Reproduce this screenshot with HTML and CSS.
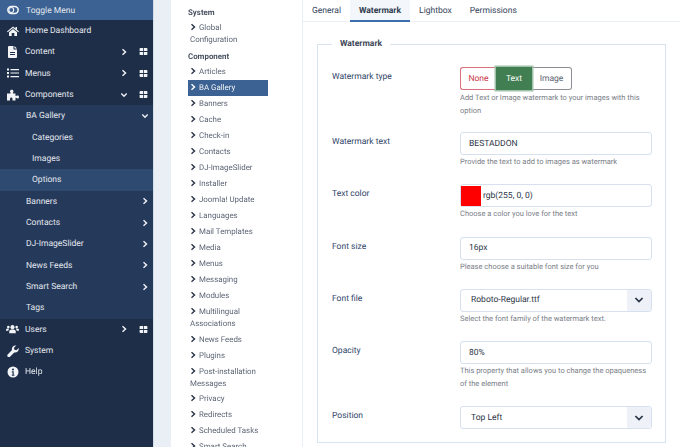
FILE: index.html
```html
<!DOCTYPE html>
<html lang="en">
<head>
<meta charset="utf-8">
<title>BA Gallery Options</title>
<link rel="stylesheet" href="styles.css">
</head>
<body>
<svg class="defs" width="0" height="0" aria-hidden="true">
  <symbol id="chev-r" viewBox="0 0 10 12"><path d="M2.5 1.5 7.5 6l-5 4.5" fill="none" stroke="currentColor" stroke-width="2.4"/></symbol>
  <symbol id="chev-d" viewBox="0 0 12 10"><path d="M1.5 2.5 6 7l4.5-4.5" fill="none" stroke="currentColor" stroke-width="2.2"/></symbol>
  <symbol id="grid" viewBox="0 0 10 9"><path d="M0 1a1 1 0 0 1 1-1h3.500v4H0zM5.500 0H9a1 1 0 0 1 1 1v3H5.500zM0 5h4.500v4H1a1 1 0 0 1-1-1zM5.500 5H10v3a1 1 0 0 1-1 1H5.500z" fill="currentColor"/></symbol>
</svg>
<div class="page">
  <aside class="sidebar">
    <div class="toggle">
      <svg class="ico" viewBox="0 0 14 10"><rect x="1" y="1" width="12" height="8" rx="4" fill="none" stroke="currentColor" stroke-width="1.800"/><circle cx="5" cy="5" r="2.800" fill="none" stroke="currentColor" stroke-width="1.200"/></svg>
      <span>Toggle Menu</span>
    </div>
    <ul class="menu">
      <li class="item"><svg class="ico" viewBox="0 0 12 10"><path d="M6 .5 0 5.500l.7.8L6 2l5.300 4.300.7-.8-2-1.700V1H8.500v1.500zM2 6.300 6 3l4 3.300V10H7.300V7H4.700v3H2z" fill="currentColor"/></svg><span class="lbl">Home Dashboard</span></li>
      <li class="item"><svg class="ico" viewBox="0 0 12 12"><path d="M2 0h4.500v3.500H10V11a1 1 0 0 1-1 1H2a1 1 0 0 1-1-1V1a1 1 0 0 1 1-1zm5.500 0L10 2.500H7.500zM3 6v1h5V6zm0 2v1h5V8z" fill="currentColor" fill-rule="evenodd"/></svg><span class="lbl">Content</span><svg class="chev"><use href="#chev-r"/></svg><svg class="grid"><use href="#grid"/></svg></li>
      <li class="item"><svg class="ico" viewBox="0 0 12 10"><path d="M0 .5h2v2H0zM3.500 1H12v1.200H3.500zM0 4h2v2H0zM3.500 4.400H12v1.200H3.500zM0 7.500h2v2H0zM3.500 8H12v1.200H3.500z" fill="currentColor"/></svg><span class="lbl">Menus</span><svg class="chev"><use href="#chev-r"/></svg><svg class="grid"><use href="#grid"/></svg></li>
      <li class="item"><svg class="ico" viewBox="0 0 12 11"><path d="M0 4h3.500c.5-.7-.5-1-.5-2.200C3 .8 3.700.2 4.700.2s1.800.6 1.800 1.600C6.500 3 5.500 3.300 6 4h2.500v2.500c.7.500 1-.5 2-.5 1 0 1.500.7 1.500 1.500S11.500 9 10.500 9c-1 0-1.300-1-2-.5V11H5.500V9.500C5.500 8.700 5 8 4.200 8S3 8.700 3 9.500V11H0z" fill="currentColor"/></svg><span class="lbl">Components</span><svg class="chev down"><use href="#chev-d"/></svg><svg class="grid"><use href="#grid"/></svg></li>
      <li class="sub">
        <ul>
          <li class="row open"><span class="lbl">BA Gallery</span><svg class="chev2 down"><use href="#chev-d"/></svg></li>
          <li class="row deep"><span class="lbl">Categories</span></li>
          <li class="row deep"><span class="lbl">Images</span></li>
          <li class="row deep current"><span class="lbl">Options</span></li>
          <li class="row"><span class="lbl">Banners</span><svg class="chev2"><use href="#chev-r"/></svg></li>
          <li class="row"><span class="lbl">Contacts</span><svg class="chev2"><use href="#chev-r"/></svg></li>
          <li class="row"><span class="lbl">DJ-ImageSlider</span><svg class="chev2"><use href="#chev-r"/></svg></li>
          <li class="row"><span class="lbl">News Feeds</span><svg class="chev2"><use href="#chev-r"/></svg></li>
          <li class="row"><span class="lbl">Smart Search</span><svg class="chev2"><use href="#chev-r"/></svg></li>
          <li class="row"><span class="lbl">Tags</span></li>
        </ul>
      </li>
      <li class="item"><svg class="ico wide" viewBox="0 0 14 10"><circle cx="7" cy="3" r="2.200" fill="currentColor"/><circle cx="2.500" cy="2.800" r="1.400" fill="currentColor"/><circle cx="11.500" cy="2.800" r="1.400" fill="currentColor"/><path d="M3.500 9.500V7.500C3.500 6 5 5.500 7 5.500s3.500.5 3.500 2v2zM0 7V6c0-1 1-1.500 2.500-1.500.4 0 .7 0 1 .1C2.800 5.200 2.500 6 2.500 7zM14 7V6c0-1-1-1.500-2.500-1.500-.4 0-.7 0-1 .1.700.6 1 1.400 1 2.400z" fill="currentColor"/></svg><span class="lbl">Users</span><svg class="chev"><use href="#chev-r"/></svg><svg class="grid"><use href="#grid"/></svg></li>
      <li class="item"><svg class="ico" viewBox="0 0 12 12"><path d="M11.700 3c.3 1.300-.1 2.600-1 3.500-.9.900-2.200 1.200-3.400.9L3 11.700c-.6.600-1.700.6-2.300 0-.6-.7-.6-1.700 0-2.300L5 5.100C4.600 3.800 5 2.500 5.900 1.500 6.800.6 8 .2 9.200.5L7 2.700l.4 2 2 .5z" fill="currentColor"/></svg><span class="lbl">System</span></li>
      <li class="item"><svg class="ico" viewBox="0 0 12 12"><path d="M6 .5a5.500 5.500 0 1 1 0 11 5.500 5.500 0 0 1 0-11zM6 2.500a1 1 0 1 0 0 2 1 1 0 0 0 0-2zM4.800 5.300v1h.7v2.400h-.7v1h2.600v-1h-.7V5.300z" fill="currentColor" fill-rule="evenodd"/></svg><span class="lbl">Help</span></li>
    </ul>
  </aside>

  <nav class="subnav">
    <h2 class="nav-head">System</h2>
    <ul class="nav-list">
      <li><svg class="nchev"><use href="#chev-r"/></svg>Global Configuration</li>
    </ul>
    <h2 class="nav-head second">Component</h2>
    <ul class="nav-list">
      <li><svg class="nchev"><use href="#chev-r"/></svg>Articles</li>
      <li class="active"><svg class="nchev"><use href="#chev-r"/></svg>BA Gallery</li>
      <li><svg class="nchev"><use href="#chev-r"/></svg>Banners</li>
      <li><svg class="nchev"><use href="#chev-r"/></svg>Cache</li>
      <li><svg class="nchev"><use href="#chev-r"/></svg>Check-in</li>
      <li><svg class="nchev"><use href="#chev-r"/></svg>Contacts</li>
      <li><svg class="nchev"><use href="#chev-r"/></svg>DJ-ImageSlider</li>
      <li><svg class="nchev"><use href="#chev-r"/></svg>Installer</li>
      <li><svg class="nchev"><use href="#chev-r"/></svg>Joomla! Update</li>
      <li><svg class="nchev"><use href="#chev-r"/></svg>Languages</li>
      <li><svg class="nchev"><use href="#chev-r"/></svg>Mail Templates</li>
      <li><svg class="nchev"><use href="#chev-r"/></svg>Media</li>
      <li><svg class="nchev"><use href="#chev-r"/></svg>Menus</li>
      <li><svg class="nchev"><use href="#chev-r"/></svg>Messaging</li>
      <li><svg class="nchev"><use href="#chev-r"/></svg>Modules</li>
      <li><svg class="nchev"><use href="#chev-r"/></svg>Multilingual Associations</li>
      <li><svg class="nchev"><use href="#chev-r"/></svg>News Feeds</li>
      <li><svg class="nchev"><use href="#chev-r"/></svg>Plugins</li>
      <li><svg class="nchev"><use href="#chev-r"/></svg>Post-installation Messages</li>
      <li><svg class="nchev"><use href="#chev-r"/></svg>Privacy</li>
      <li><svg class="nchev"><use href="#chev-r"/></svg>Redirects</li>
      <li><svg class="nchev"><use href="#chev-r"/></svg>Scheduled Tasks</li>
      <li><svg class="nchev"><use href="#chev-r"/></svg>Smart Search</li>
    </ul>
  </nav>

  <main class="main">
    <div class="tabs">
      <span class="tab">General</span>
      <span class="tab active">Watermark</span>
      <span class="tab">Lightbox</span>
      <span class="tab">Permissions</span>
    </div>
    <fieldset class="panel">
      <legend class="legend">Watermark</legend>
      <div class="field tight">
        <div class="label">Watermark type</div>
        <div class="control">
          <div class="switch">
            <span class="opt none">None</span>
            <span class="opt text">Text</span>
            <span class="opt image">Image</span>
          </div>
          <p class="desc">Add Text or Image watermark to your images with this option</p>
        </div>
      </div>
      <div class="field">
        <div class="label">Watermark text</div>
        <div class="control">
          <div class="input">BESTADDON</div>
          <p class="desc">Provide the text to add to images as watermark</p>
        </div>
      </div>
      <div class="field">
        <div class="label">Text color</div>
        <div class="control">
          <div class="input color"><span class="swatch"></span>rgb(255, 0, 0)</div>
          <p class="desc">Choose a color you love for the text</p>
        </div>
      </div>
      <div class="field">
        <div class="label">Font size</div>
        <div class="control">
          <div class="input">16px</div>
          <p class="desc">Please choose a suitable font size for you</p>
        </div>
      </div>
      <div class="field">
        <div class="label">Font file</div>
        <div class="control">
          <div class="input select"><span class="val">Roboto-Regular.ttf</span><span class="caret"><svg class="caret-ico"><use href="#chev-d"/></svg></span></div>
          <p class="desc">Select the font family of the watermark text.</p>
        </div>
      </div>
      <div class="field">
        <div class="label">Opacity</div>
        <div class="control">
          <div class="input">80%</div>
          <p class="desc">This property that allows you to change the opaqueness of the element</p>
        </div>
      </div>
      <div class="field">
        <div class="label">Position</div>
        <div class="control">
          <div class="input select"><span class="val">Top Left</span><span class="caret"><svg class="caret-ico"><use href="#chev-d"/></svg></span></div>
        </div>
      </div>
    </fieldset>
  </main>
</div>
</body>
</html>
```

FILE: styles.css
```css
* { box-sizing: border-box; }
html, body { margin: 0; padding: 0; height: 447px; overflow: hidden; }
body { font-family: Roboto, "Liberation Sans", sans-serif; font-size: 8.53px; background: #e9eff5; color: #22324a; text-rendering: geometricPrecision; }
ul { list-style: none; margin: 0; padding: 0; }
p, h2 { margin: 0; }
.defs { position: absolute; }
.page { display: flex; width: 680px; height: 447px; overflow: hidden; filter: blur(.3px); }

/* sidebar */
.sidebar { width: 154px; flex: none; background: #1e2e48; color: #e3e7ee; border-right: 1px solid #d5dde8; }
.toggle { display: flex; align-items: center; height: 20px; background: #3b6292; padding-left: 7px; }
.toggle span { margin-left: 7px; padding-top: 2px; }
.toggle .ico { width: 12px; height: 10px; margin-right: 0; }
.item { display: flex; align-items: center; height: 21.33px; padding-left: 7px; }
.ico { width: 12px; height: 12px; flex: none; margin-right: 6px; color: #f2f4f7; }
.ico.wide { width: 13px; margin-left: -1px; }
.lbl { flex: 1; white-space: nowrap; padding-top: 1px; }
.chev { width: 6px; height: 8px; flex: none; color: #f2f4f7; margin-right: 12px; }
.chev.down { width: 8px; margin-right: 11px; height: 6px; }
.grid { width: 9px; height: 7px; flex: none; color: #f2f4f7; margin-right: 5px; }
.sub { background: #25395a; }
.row { display: flex; align-items: center; height: 21.33px; padding-left: 26px; }
.row.deep { padding-left: 32px; }
.row.current { background: #2f4a70; }
.chev2 { width: 6px; height: 8px; flex: none; color: #f2f4f7; margin-right: 5px; }
.chev2.down { width: 8px; height: 6px; margin-right: 4px; }

/* sub navigation */
.subnav { width: 132px; flex: none; margin-left: 17px; background: #fff; padding: 7px 34px 0 17px; height: 447px; overflow: hidden; color: #5d6675; line-height: 11.7px; font-size: 7.9px; border-right: 1px solid #e9eff5; }
.nav-head { font-size: 7.9px; font-weight: 700; color: #4a5261; line-height: 12px; margin-bottom: 1px; }
.nav-head.second { margin-top: 4px; }
.nav-list li { padding: 2px 2px; min-height: 16px; }
.nav-list li.active { background: #3b6292; color: #f2f5f9; }
.nchev { width: 6px; height: 8px; color: #2b3547; margin-right: 3px; vertical-align: -1px; }
.active .nchev { color: #fff; }

/* main */
.main { flex: 1; background: #fff; min-width: 0; }
.tabs { display: flex; height: 22px; border-bottom: 1px solid #e9eff5; }
.tab { padding: 0 9px; line-height: 23px; color: #33445c; }
.tab.active { background: #f3f6fa; font-weight: 700; border-bottom: 2px solid #3b6fae; height: 22px; color: #2e3a4e; }
.panel { margin: 17px 14px 0 14px; padding: 18px 14px 0 14px; border: 1px solid #d9e2f0; height: 404px; min-width: 0; }
.legend { margin-left: 0; padding: 0 8px; font-weight: 700; font-size: 8.53px; line-height: 10px; color: #3c4657; }
.field { display: flex; margin-bottom: 15.5px; }
.field.tight { margin-bottom: 14.5px; }
.label { width: 128px; flex: none; padding-top: 4px; color: #2f4468; line-height: 12px; }
.control { width: 192px; flex: none; }
.switch { display: flex; height: 23px; margin-bottom: 1px; }
.opt { display: flex; align-items: center; justify-content: center; height: 23px; background: #fff; border: 1px solid; }
.opt.none { width: 36px; color: #c9354a; border-color: #d9707e; border-radius: 3px 0 0 3px; border-right: 0; }
.opt.text { width: 36px; color: #fff; background: #417f52; border: 1px solid #417f52; box-shadow: 0 0 0 1.500px #a3c2ab; position: relative; }
.opt.image { width: 40px; color: #5b6470; border-color: #8b8f94; border-left: 0; border-radius: 0 3px 3px 0; }
.desc { font-size: 7.5px; line-height: 12.8px; color: #7a8088; padding-top: 1px; }
.input { display: flex; align-items: center; height: 23px; border: 1px solid #d6e0ef; border-radius: 3px; padding-left: 8px; color: #2c3547; background: #fff; }
.input.color { padding-left: 0; }
.swatch { width: 20px; height: 20px; background: #f00; margin-right: 2px; flex: none; }
.input.select { padding-left: 10px; padding-right: 0; }
.val { flex: 1; }
.caret { display: flex; align-items: center; justify-content: center; width: 24px; height: 21px; background: #eef1f7; border-radius: 0 3px 3px 0; }
.caret-ico { width: 10px; height: 8px; color: #2b3547; }
```
